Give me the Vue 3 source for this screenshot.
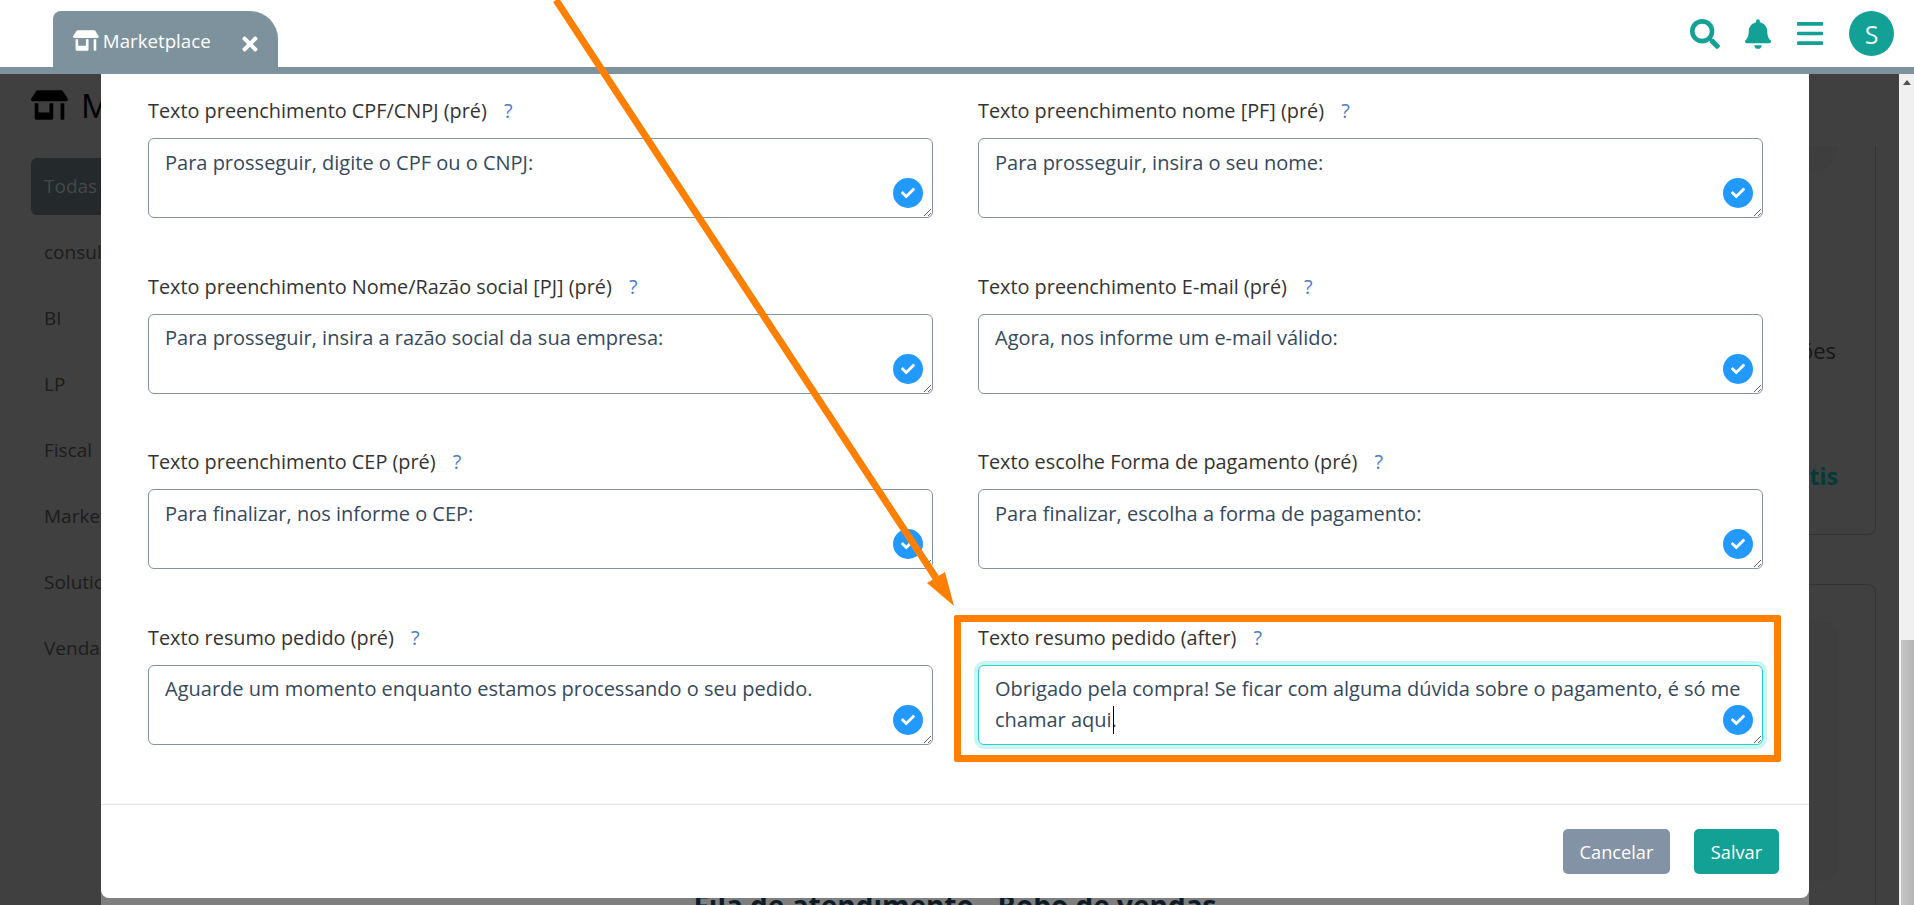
<template>
  <div class="screen">
    <header class="topbar">
      <div class="tab">
        <svg class="tab-icon" viewBox="0 0 640 512"><path :d="storePath" /></svg>
        <span class="tab-label">Marketplace</span>
        <svg class="tab-close" viewBox="0 0 352 512"><path d="M242.72 256l100.07-100.07c12.28-12.28 12.28-32.19 0-44.48l-22.24-22.24c-12.28-12.28-32.19-12.28-44.48 0L176 189.28 75.93 89.21c-12.28-12.28-32.19-12.28-44.48 0L9.21 111.45c-12.28 12.28-12.28 32.19 0 44.48L109.28 256 9.21 356.07c-12.28 12.28-12.28 32.19 0 44.48l22.24 22.24c12.28 12.28 32.2 12.28 44.48 0L176 322.72l100.07 100.07c12.28 12.28 32.2 12.28 44.48 0l22.24-22.24c12.28-12.28 12.28-32.19 0-44.48L242.72 256z" /></svg>
      </div>
      <div class="actions">
        <svg class="act-search" viewBox="0 0 512 512"><path d="M505 442.7L405.3 343c-4.5-4.5-10.6-7-17-7H372c27.6-35.3 44-79.7 44-128C416 93.1 322.9 0 208 0S0 93.1 0 208s93.1 208 208 208c48.3 0 92.7-16.4 128-44v16.3c0 6.4 2.5 12.5 7 17l99.7 99.7c9.4 9.4 24.6 9.4 33.9 0l28.3-28.3c9.4-9.4 9.4-24.6.1-34zM208 336c-70.7 0-128-57.2-128-128 0-70.7 57.2-128 128-128 70.7 0 128 57.2 128 128 0 70.7-57.2 128-128 128z" /></svg>
        <svg class="act-bell" viewBox="0 0 448 512"><path d="M224 512c35.32 0 63.97-28.65 63.97-64H160.03c0 35.35 28.65 64 63.97 64zm215.39-149.71c-19.32-20.76-55.47-51.99-55.47-154.29 0-77.7-54.48-139.9-127.94-155.16V32c0-17.67-14.32-32-31.98-32s-31.98 14.33-31.98 32v20.84C118.56 68.1 64.08 130.3 64.08 208c0 102.3-36.15 133.53-55.47 154.29-6 6.45-8.66 14.16-8.61 21.71.11 16.4 12.98 32 32.1 32h383.8c19.12 0 32-15.6 32.1-32 .05-7.55-2.61-15.27-8.61-21.71z" /></svg>
        <svg class="act-bars" viewBox="0 0 448 448" preserveAspectRatio="none"><path d="M16 72h416c8.837 0 16-7.163 16-16V16c0-8.837-7.163-16-16-16H16C7.163 0 0 7.163 0 16v40c0 8.837 7.163 16 16 16zm0 188h416c8.837 0 16-7.163 16-16v-40c0-8.837-7.163-16-16-16H16c-8.837 0-16 7.163-16 16v40c0 8.837 7.163 16 16 16zm0 188h416c8.837 0 16-7.163 16-16v-40c0-8.837-7.163-16-16-16H16c-8.837 0-16 7.163-16 16v40c0 8.837 7.163 16 16 16z" /></svg>
        <div class="avatar">S</div>
      </div>
    </header>
    <div class="tab-line"></div>

    <div class="page">
      <aside class="sidebar">
        <div class="page-title">
          <svg viewBox="0 0 640 512"><path :d="storePath" /></svg>
          <span>Marketplace</span>
        </div>
        <nav class="menu">
          <div
            v-for="(item, i) in menu"
            :key="item"
            class="menu-item"
            :class="{ active: i === 0 }"
          >{{ item }}</div>
        </nav>
      </aside>
      <main class="content">
        <section class="card first">
          <div class="thumb"></div>
          <p class="card-text">opções</p>
          <p class="card-price">Grátis</p>
        </section>
        <section class="card second">
          <div class="thumb"></div>
        </section>
      </main>
      <div class="scrollbar">
        <span class="scroll-up"></span>
        <span class="scroll-thumb"></span>
      </div>
    </div>

    <div class="modal-wrap">
      <div class="modal">
        <div class="modal-body">
          <div v-for="field in fields" :key="field.label" class="field">
            <label class="field-label">
              {{ field.label }}
              <span class="hint">?</span>
            </label>
            <div class="input-wrap">
              <textarea
                class="field-input"
                :class="{ focused: field.focused }"
                :value="field.value"
                readonly
              ></textarea>
              <span v-if="field.focused" class="fake-caret"></span>
              <span class="ok-badge">
                <svg viewBox="0 0 512 512"><path d="M173.898 439.404l-166.4-166.4c-9.997-9.997-9.997-26.206 0-36.204l36.203-36.204c9.997-9.998 26.207-9.998 36.204 0L192 312.69 432.095 72.596c9.997-9.997 26.207-9.997 36.204 0l36.203 36.204c9.997 9.997 9.997 26.206 0 36.204l-294.4 294.401c-9.998 9.997-26.207 9.997-36.204-.001z" /></svg>
              </span>
            </div>
          </div>
        </div>
        <footer class="modal-footer">
          <button class="btn cancel">Cancelar</button>
          <button class="btn save">Salvar</button>
        </footer>
      </div>
      <h2 class="behind-title">Fila de atendimento - Robo de vendas</h2>
    </div>

    <!-- anotacao laranja por cima do print -->
    <div class="mark-box"></div>
    <svg class="mark-arrow" viewBox="0 0 1914 905">
      <line x1="556" y1="0" x2="936" y2="578" stroke="#ff8000" stroke-width="7" />
      <polygon points="954,606 927,583 945,572" fill="#ff8000" />
    </svg>
  </div>
</template>

<script setup>
const storePath = 'M320 384H128V224H64v256c0 17.7 14.3 32 32 32h256c17.7 0 32-14.3 32-32V224h-64v160zm314.6-241.8l-85.3-128c-6-8.9-16-14.2-26.7-14.2H117.4c-10.7 0-20.7 5.3-26.6 14.2l-85.3 128c-14.2 21.3 1 49.8 26.6 49.8H608c25.5 0 40.7-28.5 26.6-49.8zM512 496c0 8.8 7.2 16 16 16h32c8.8 0 16-7.2 16-16V224h-64v272z';

const menu = ['Todas', 'consultoria', 'BI', 'LP', 'Fiscal', 'Marketing', 'Solutions', 'Vendas'];

const fields = [
  { label: 'Texto preenchimento CPF/CNPJ (pré)', value: 'Para prosseguir, digite o CPF ou o CNPJ:' },
  { label: 'Texto preenchimento nome [PF] (pré)', value: 'Para prosseguir, insira o seu nome:' },
  { label: 'Texto preenchimento Nome/Razão social [PJ] (pré)', value: 'Para prosseguir, insira a razão social da sua empresa:' },
  { label: 'Texto preenchimento E-mail (pré)', value: 'Agora, nos informe um e-mail válido:' },
  { label: 'Texto preenchimento CEP (pré)', value: 'Para finalizar, nos informe o CEP:' },
  { label: 'Texto escolhe Forma de pagamento (pré)', value: 'Para finalizar, escolha a forma de pagamento:' },
  { label: 'Texto resumo pedido (pré)', value: 'Aguarde um momento enquanto estamos processando o seu pedido.' },
  { label: 'Texto resumo pedido (after)', value: 'Obrigado pela compra! Se ficar com alguma dúvida sobre o pagamento, é só me chamar aqui.', focused: true }
];
</script>

<style>
html, body { margin: 0; height: 905px; overflow: hidden; }
</style>

<style scoped>
.screen {
  position: relative; width: 1914px; height: 905px; overflow: hidden;
  display: flex; flex-direction: column; background: #fff;
  font-family: "Open Sans", "Liberation Sans", sans-serif; color: #333;
}

.topbar { height: 67px; display: flex; justify-content: space-between; padding: 0 20px 0 53px; flex-shrink: 0; }
.tab {
  width: 225px; height: 56px; margin-top: 11px; box-sizing: border-box; padding: 0 20px; background: #7d929c;
  border-radius: 8px 28px 0 0; display: flex; align-items: center; color: #fff;
}
.tab-icon { width: 26px; height: 21px; fill: #fff; margin-right: 4px; margin-top: 3px; }
.tab-label { font-size: 18.7px; width: 140px; margin-top: 3px; }
.tab-close { width: 16px; height: 22px; fill: #fff; margin-top: 9px; }

.actions { display: flex; align-items: center; }
.actions svg { fill: #13a095; }
.act-search { width: 30px; height: 30px; margin-right: 25px; margin-top: 1px; }
.act-bell { width: 26px; height: 30px; margin-right: 26px; margin-top: 1px; }
.act-bars { width: 26px; height: 23px; margin-right: 26px; }
.avatar {
  width: 45px; height: 45px; border-radius: 50%; background: #13a095; color: #e8f5f4;
  display: flex; align-items: center; justify-content: center; font-size: 25px;
}
.tab-line { height: 7px; background: #7d929c; flex-shrink: 0; }

.page { flex: 1; display: flex; background: #404040; min-height: 0; }
.sidebar { width: 300px; flex-shrink: 0; padding: 16px 0 0 31px; box-sizing: border-box; }
.page-title { display: flex; align-items: center; gap: 13px; height: 30px; font-size: 33px; color: #000; white-space: nowrap; }
.page-title svg { width: 37px; height: 30px; fill: #000; }
.menu { margin-top: 38px; }
.menu-item { height: 57px; margin-bottom: 9px; padding-left: 13px; line-height: 57px; font-size: 19px; color: #1c1c1c; }
.menu-item.active { background: #24292b; border-radius: 6px; color: #43494b; }

.content { flex: 1; padding: 72px 23px 0 0; min-width: 0; }
.card { border-right: 1px solid #333; border-bottom: 1px solid #333; border-radius: 0 0 8px 0; box-sizing: border-box; }
.card.first { height: 389px; text-align: right; padding-right: 37px; margin-bottom: 49px; }
.card.second { height: 400px; padding-top: 36px; border-top: 1px solid #333; border-radius: 0 8px 8px 0; }
.card .thumb { background: #3e3e3e; border-radius: 0 0 26px 0; }
.card.first .thumb { height: 26px; }
.card.second .thumb { height: 260px; margin-right: 38px; border-radius: 0 14px 14px 0; }
.card-text { margin: 164px 2px 0 0; font-size: 22px; line-height: 28px; color: #161616; }
.card-price { margin: 98px 0 0; font-size: 23px; line-height: 28px; font-weight: 700; color: #053a36; }

.scrollbar { position: relative; width: 15px; background: #f0f0f0; flex-shrink: 0; display: flex; flex-direction: column; }
.scroll-up { width: 0; height: 0; margin: 6px 0 0 4px; border: 4px solid transparent; border-top: 0; border-bottom: 5px solid #505050; }
.scroll-thumb { margin: 555px 0 0 2px; flex: 1; background: linear-gradient(90deg, #c6c6c6, #b4b4b4); }

.modal-wrap {
  position: absolute; left: 101px; top: 74px; width: 1708px; height: 831px; overflow: hidden;
  background: #7f7f7f; isolation: isolate;
}
.modal {
  position: relative; z-index: 1;
  height: 824px; box-sizing: border-box; background: #fff; border-radius: 0 0 8px 8px;
  display: flex; flex-direction: column;
}
.modal-body {
  flex: 1; display: grid; grid-template-columns: 785px 785px; column-gap: 45px; row-gap: 55.5px;
  align-content: start; padding: 24px 0 0 47px;
}
.field-label { display: block; height: 26px; line-height: 26px; margin-bottom: 14px; font-size: 19.85px; color: #333; }
.hint { margin-left: 12px; color: #4a7bd0; }
.input-wrap { position: relative; height: 80px; }
.field-input {
  display: block; width: 100%; height: 100%; box-sizing: border-box; margin: 0; padding: 7.5px 10px 7.5px 16px;
  border: 1px solid #8492a6; border-radius: 6px; outline: none; background: #fff;
  font: 20px/31px "Open Sans", "Liberation Sans", sans-serif; color: #35495c;
  overflow: hidden;
}
.field-input.focused { border-color: #2fd0c4; box-shadow: 0 0 0 4px #c9f6f2; }
.fake-caret { position: absolute; left: 135px; top: 41px; width: 1px; height: 28px; background: #000; }
.ok-badge {
  position: absolute; right: 10px; bottom: 10px; width: 30px; height: 30px; border-radius: 50%;
  background: #2299ff; display: flex; align-items: center; justify-content: center;
}
.ok-badge svg { width: 14px; height: 14px; fill: #fff; }

.modal-footer {
  height: 94px; box-sizing: border-box; border-top: 1px solid #e2e2e2; padding: 24px 30px 0 0;
  display: flex; justify-content: flex-end; align-items: flex-start; gap: 24px;
}
.btn { height: 45px; border: none; border-radius: 5px; color: #fff; font: 18.2px "Open Sans", "Liberation Sans", sans-serif; padding: 0; }
.btn.cancel { width: 107px; background: #8492a6; }
.btn.save { width: 85px; background: #13a095; }

.behind-title { margin: 0; text-align: center; font-size: 28px; line-height: 14px; font-weight: 700; color: #0d1b26; white-space: nowrap; }

.mark-box {
  position: absolute; left: 954px; top: 615px; width: 827px; height: 147px; box-sizing: border-box;
  border: 7px solid #ff8000; border-radius: 2px; pointer-events: none;
}
.mark-arrow { position: absolute; left: 0; top: 0; width: 1914px; height: 905px; pointer-events: none; }
</style>
